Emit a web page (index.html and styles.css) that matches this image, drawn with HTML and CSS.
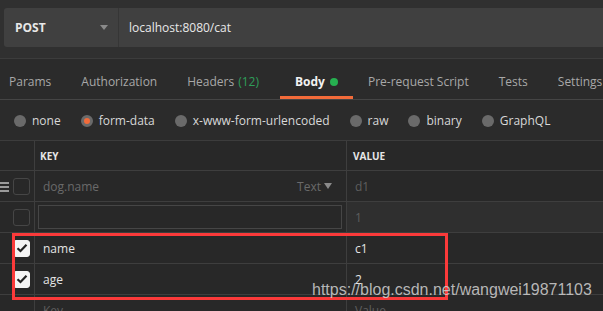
FILE: index.html
```html
<!DOCTYPE html>
<html lang="en">
<head>
    <meta charset="UTF-8">
    <meta name="viewport" content="width=device-width, initial-scale=1.0">
    <title>POST localhost:8080/cat</title>
    <link rel="stylesheet" href="styles.css">
</head>
<body>
    <div class="top">
        <div class="req-bar">
            <div class="method">
                <span>POST</span>
                <span class="caret"></span>
            </div>
            <div class="url">localhost:8080/cat</div>
        </div>
    </div>

    <div class="tabs">
        <div class="tab">Params</div>
        <div class="tab">Authorization</div>
        <div class="tab">Headers <span class="count">(12)</span></div>
        <div class="tab active">Body <span class="dot"></span></div>
        <div class="tab">Pre-request Script</div>
        <div class="tab">Tests</div>
        <div class="tab">Settings</div>
    </div>

    <div class="body-types">
        <label class="radio"><span class="circle"></span>none</label>
        <label class="radio"><span class="circle on"></span>form-data</label>
        <label class="radio"><span class="circle"></span>x-www-form-urlencoded</label>
        <label class="radio"><span class="circle"></span>raw</label>
        <label class="radio"><span class="circle"></span>binary</label>
        <label class="radio"><span class="circle"></span>GraphQL</label>
    </div>

    <div class="table">
        <div class="row head">
            <div class="cell check"></div>
            <div class="cell key">KEY</div>
            <div class="cell value">VALUE</div>
        </div>
        <div class="row">
            <div class="cell check">
                <span class="handle"></span>
                <span class="box"></span>
            </div>
            <div class="cell key">
                <span class="placeholder">dog.name</span>
                <span class="type">Text <span class="tri"></span></span>
            </div>
            <div class="cell value placeholder dim">d1</div>
        </div>
        <div class="row">
            <div class="cell check"><span class="box"></span></div>
            <div class="cell key"><div class="key-input"></div></div>
            <div class="cell value focus placeholder dim">1</div>
        </div>
        <div class="row">
            <div class="cell check"><span class="box checked"><svg width="12" height="10" viewBox="0 0 12 10"><path d="M1.5 5.2 L4.5 8 L10.5 1.8" fill="none" stroke="#222" stroke-width="2.2"/></svg></span></div>
            <div class="cell key">name</div>
            <div class="cell value">c1</div>
        </div>
        <div class="row">
            <div class="cell check"><span class="box checked"><svg width="12" height="10" viewBox="0 0 12 10"><path d="M1.5 5.2 L4.5 8 L10.5 1.8" fill="none" stroke="#222" stroke-width="2.2"/></svg></span></div>
            <div class="cell key">age</div>
            <div class="cell value">2</div>
        </div>
        <div class="row">
            <div class="cell check"></div>
            <div class="cell key placeholder dim">Key</div>
            <div class="cell value placeholder dim">Value</div>
        </div>

        <div class="highlight"></div>
        <div class="watermark">https://blog.csdn.net/wangwei19871103</div>
    </div>
</body>
</html>
```
FILE: styles.css
```css
html, body {
    margin: 0;
    padding: 0;
    background-color: #282828;
    overflow: hidden;
}

body {
    width: 603px;
    height: 311px;
    font-family: "Open Sans", "Liberation Sans", sans-serif;
    font-size: 12px;
    color: #cfcfcf;
}

/* request bar */
.top {
    background-color: #303030;
    padding: 8px 0 11px 4px;
    border-bottom: 1px solid #3c3c3c;
}

.req-bar {
    display: flex;
    height: 39px;
    background-color: #404040;
    border-radius: 3px 0 0 3px;
}

.method {
    width: 115px;
    display: flex;
    align-items: center;
    justify-content: space-between;
    padding: 0 10px 0 11px;
    box-sizing: border-box;
    border-right: 1px solid #363636;
    font-weight: 700;
    color: #e8e8e8;
}

.caret {
    width: 0;
    height: 0;
    border-left: 4px solid transparent;
    border-right: 4px solid transparent;
    border-top: 5px solid #8a8a8a;
}

.url {
    display: flex;
    align-items: center;
    padding-left: 10px;
    color: #e8e8e8;
}

/* tabs */
.tabs {
    display: flex;
    height: 40px;
    background-color: #2b2b2b;
    border-bottom: 1px solid #454545;
    white-space: nowrap;
}

.tab {
    display: flex;
    align-items: center;
    gap: 4px;
    padding: 8px 15px 0;
    color: #a8a8a8;
    font-size: 12px;
    border-bottom: 3px solid transparent;
    box-sizing: border-box;
}

.tab:first-child {
    padding-left: 9px;
}

.tab.active {
    margin-left: 6px;
    color: #f2f2f2;
    font-weight: 700;
    border-bottom-color: #f26b3a;
}

.count {
    color: #2f9e5a;
}

.dot {
    width: 8px;
    height: 8px;
    border-radius: 50%;
    background-color: #26b050;
    margin-left: 1px;
}

/* body types */
.body-types {
    display: flex;
    align-items: center;
    height: 40px;
    padding: 1px 0 0 14px;
    box-sizing: border-box;
    gap: 0 20px;
    background-color: #2b2b2b;
    white-space: nowrap;
}

.radio {
    display: flex;
    align-items: center;
    gap: 6px;
    color: #d8d8d8;
}

.circle {
    width: 12px;
    height: 12px;
    border-radius: 50%;
    background-color: #6a6a6a;
    box-sizing: border-box;
}

.circle.on {
    background-color: #f26b3a;
    border: 3px solid #6a6a6a;
}

/* table */
.table {
    position: relative;
    border-top: 1px solid #3c3c3c;
}

.row {
    display: flex;
    height: 31px;
    border-bottom: 1px solid #3e3e3e;
    box-sizing: border-box;
}

.row.head {
    height: 30px;
}

.cell {
    display: flex;
    align-items: center;
    box-sizing: border-box;
}

.check {
    width: 35px;
    border-right: 1px solid #3e3e3e;
    padding-left: 13px;
    position: relative;
}

.key {
    width: 312px;
    padding-left: 8px;
    border-right: 1px solid #3e3e3e;
    color: #e4e4e4;
}

.value {
    flex: 1;
    padding-left: 8px;
    color: #e4e4e4;
}

.head .key,
.head .value {
    font-size: 10px;
    font-weight: 700;
    color: #e6e6e6;
    padding-left: 5px;
}

.head .value {
    padding-left: 6px;
}

.placeholder {
    color: #6a6a6a;
}

.value.dim,
.key.dim {
    color: #5e5e5e;
}

.focus {
    background-color: #2f2f2f;
}

.handle {
    position: absolute;
    left: 0;
    top: 11px;
    width: 9px;
    height: 2px;
    background-color: #9a9a9a;
    box-shadow: 0 4px 0 #9a9a9a, 0 8px 0 #9a9a9a;
}

.box {
    width: 17px;
    height: 17px;
    border: 1px solid #464646;
    border-radius: 3px;
    box-sizing: border-box;
    display: flex;
    align-items: center;
    justify-content: center;
}

.box.checked {
    background-color: #f4f4f4;
    border-color: #f4f4f4;
}

.type {
    margin-left: auto;
    margin-right: 14px;
    color: #6a6a6a;
    display: flex;
    align-items: center;
    gap: 3px;
}

.tri {
    width: 0;
    height: 0;
    border-left: 4px solid transparent;
    border-right: 4px solid transparent;
    border-top: 6px solid #8a8a8a;
}

.row .key:has(.key-input) {
    padding: 3px 4px 3px 3px;
}

.key-input {
    width: 100%;
    height: 100%;
    border: 1px solid #464646;
    box-sizing: border-box;
}

/* overlays */
.highlight {
    position: absolute;
    left: 12px;
    top: 92px;
    width: 436px;
    height: 67px;
    border: 3px solid #fb3a3a;
    box-sizing: border-box;
}

.watermark {
    position: absolute;
    left: 312px;
    top: 140px;
    font-family: "Liberation Sans", Arial, sans-serif;
    font-size: 16px;
    color: rgba(210, 210, 210, 0.85);
    white-space: nowrap;
}
```
